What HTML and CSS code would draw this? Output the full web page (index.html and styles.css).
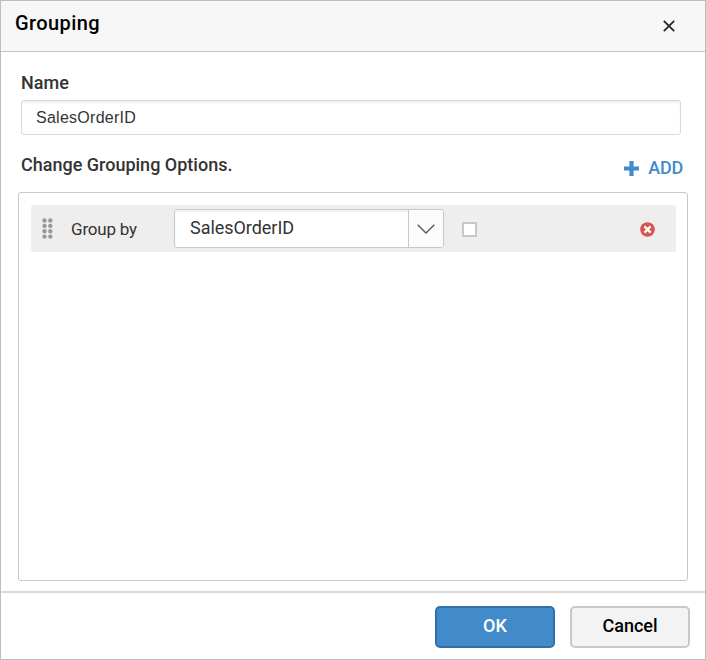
FILE: index.html
```html
<!DOCTYPE html>
<html lang="en">
<head>
<meta charset="utf-8">
<title>Grouping</title>
<link rel="stylesheet" href="styles.css">
</head>
<body>
<section class="dialog" role="dialog">
  <header class="header">
    <h1 class="title"><span>Grouping</span></h1>
    <svg class="close" width="12" height="12" viewBox="0 0 12 12"><path d="M.8.8l10.4 10.4M11.2.8L.8 11.2"/></svg>
  </header>
  <main class="content">
    <div class="label"><span>Name</span></div>
    <div class="name-input"><span>SalesOrderID</span></div>
    <div class="options-bar">
      <div class="label options-label"><span>Change Grouping Options.</span></div>
      <div class="add">
        <svg width="15" height="15" viewBox="0 0 15 15"><path d="M5.4 0h4.2v5.4H15v4.2H9.6V15H5.4V9.6H0V5.4h5.4z"/></svg>
        <span>ADD</span>
      </div>
    </div>
    <div class="panel">
      <div class="row">
        <svg class="grip" width="11" height="21" viewBox="0 0 11 21">
          <circle cx="2.5" cy="2.5" r="2.2"/><circle cx="8.3" cy="2.5" r="2.2"/>
          <circle cx="2.5" cy="7.9" r="2.2"/><circle cx="8.3" cy="7.9" r="2.2"/>
          <circle cx="2.5" cy="13.2" r="2.2"/><circle cx="8.3" cy="13.2" r="2.2"/>
          <circle cx="2.5" cy="18.6" r="2.2"/><circle cx="8.3" cy="18.6" r="2.2"/>
        </svg>
        <div class="group-by"><span>Group by</span></div>
        <div class="select">
          <div class="select-value"><span>SalesOrderID</span></div>
          <div class="select-arrow"><svg width="18" height="10" viewBox="0 0 18 10"><path d="M.7.7L9 9 17.3.7"/></svg></div>
        </div>
        <div class="checkbox"></div>
        <svg class="remove" width="15" height="15" viewBox="0 0 15 15"><circle cx="7.5" cy="7.5" r="7.3"/><path d="M4.4 4.4l6.2 6.2M10.6 4.4l-6.2 6.2"/></svg>
      </div>
    </div>
  </main>
  <footer class="footer">
    <div class="button primary"><span>OK</span></div>
    <div class="button"><span>Cancel</span></div>
  </footer>
</section>
</body>
</html>
```
FILE: styles.css
```css
* { box-sizing: border-box; }
body { margin: 0; font-family: Roboto, "Liberation Sans", sans-serif; color: #333; }
svg { display: block; flex: none; }
.dialog { width: 706px; height: 660px; border: 1px solid #bdbdbd; background: #fff; display: flex; flex-direction: column; }
.header { height: 51px; flex: none; background: #f7f7f7; border-bottom: 1px solid #c4c4c4; display: flex; justify-content: space-between; padding: 0 30px 0 14px; }
.title { margin: 10px 0 0; font-size: 20px; line-height: 24px; font-weight: 500; letter-spacing: .4px; color: #000; }
.close { margin-top: 19px; fill: none; stroke: #222; stroke-width: 1.7; }
.content { flex: 1; padding: 20px 17px 0; }
.label { margin-left: 3px; font-size: 18px; line-height: 22px; font-weight: 500; }
.name-input { margin: 6px 7px 0 3px; height: 35px; border: 1px solid #d9d9d9; border-radius: 3px; box-shadow: inset 0 2px 2px #f1f1f1; padding-left: 14px; font: 16px/33px "Liberation Sans", sans-serif; letter-spacing: .27px; }
.options-bar { height: 57px; display: flex; justify-content: space-between; padding: 19px 4px 0 0; }
.add { display: flex; gap: 9px; color: #428bca; font-size: 18px; line-height: 22px; font-weight: 500; letter-spacing: -.2px; margin-top: 3px; height: 22px; padding-right: 1px; }
.add svg { fill: #428bca; margin-top: 4px; }
.panel { height: 389px; border: 1px solid #c8c8c8; border-radius: 3px; padding: 12px 11px 0 12px; }
.row { height: 47px; background: #eee; border-radius: 3px; display: flex; align-items: center; padding: 0 21px 0 11px; }
.grip { fill: #999; }
.group-by { width: 103px; margin-left: 18px; font-size: 17px; line-height: 22px; letter-spacing: -.2px; }
.select { width: 270px; height: 39px; border: 1px solid #c8c8c8; border-radius: 3px; background: #fff; display: flex; overflow: hidden; }
.select-value { flex: 1; padding-left: 15px; font-size: 18px; line-height: 36px; letter-spacing: -.04px; box-shadow: inset 0 2px 2px #f1f1f1; }
.select-arrow { width: 36px; border-left: 1px solid #c8c8c8; background: #fcfcfc; display: flex; align-items: center; justify-content: center; padding-top: 1px; }
.select-arrow svg { fill: none; stroke: #555; stroke-width: 1.3; }
.select-arrow { width: 35px; }
.checkbox { width: 15px; height: 15px; margin: 2px 0 0 18px; border: 2px solid #c8c8c8; background: #fff; }
.remove { margin: 2px 0 0 auto; fill: #d9534f; }
.remove path { stroke: #fff; stroke-width: 2.3; }
.footer { height: 68px; flex: none; border-top: 2px solid #d9d9d9; display: flex; justify-content: flex-end; gap: 15px; padding: 13px 15px 0 0; }
.button { width: 120px; height: 42px; border: 2px solid #c8c8c8; border-radius: 5px; background: #f3f3f3; color: #000; text-align: center; font-size: 18px; line-height: 36px; font-weight: 500; }
.primary { background: #428bca; border-color: #3071a9; color: #fff; }
```
